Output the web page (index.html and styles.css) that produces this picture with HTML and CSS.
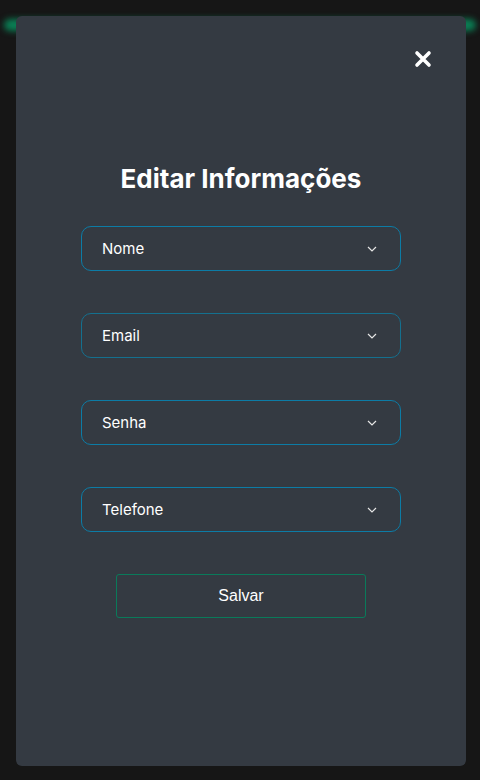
FILE: index.html
```html
<!DOCTYPE html>
<html lang="pt-BR">
<head>
<meta charset="utf-8">
<link rel="stylesheet" href="styles.css">
</head>
<body>
<div class="glow"></div>
<div class="modal">
  <div class="close-row">
    <button class="close" aria-label="Fechar">
      <svg width="18" height="18" viewBox="0 0 18 18"><path d="M3 3L15 15M15 3L3 15" stroke="#fff" stroke-width="3.6" stroke-linecap="round"/></svg>
    </button>
  </div>
  <h1 class="title">Editar Informações</h1>
  <div class="fields">
    <div class="field"><span>Nome</span><svg class="chev" width="10" height="6" viewBox="0 0 10 6"><path d="M1 1L5 5L9 1" fill="none" stroke="#e6e6e6" stroke-width="1.2"/></svg></div>
    <div class="field alt"><span>Email</span><svg class="chev" width="10" height="6" viewBox="0 0 10 6"><path d="M1 1L5 5L9 1" fill="none" stroke="#e6e6e6" stroke-width="1.2"/></svg></div>
    <div class="field"><span>Senha</span><svg class="chev" width="10" height="6" viewBox="0 0 10 6"><path d="M1 1L5 5L9 1" fill="none" stroke="#e6e6e6" stroke-width="1.2"/></svg></div>
    <div class="field"><span>Telefone</span><svg class="chev" width="10" height="6" viewBox="0 0 10 6"><path d="M1 1L5 5L9 1" fill="none" stroke="#e6e6e6" stroke-width="1.2"/></svg></div>
  </div>
  <button class="save">Salvar</button>
</div>
</body>
</html>
```
FILE: styles.css
```css
html, body {
  margin: 0;
  padding: 0;
  height: 100%;
}
body {
  background: #161616;
  font-family: Inter, "Noto Sans", sans-serif;
  color: #fff;
  position: relative;
  overflow: hidden;
}
.glow {
  position: absolute;
  left: 4px;
  right: 4px;
  top: 19px;
  height: 12px;
  border-radius: 6px;
  background: #0a8055;
  filter: blur(3px);
}
.modal {
  position: absolute;
  left: 16px;
  top: 16px;
  width: 450px;
  height: 750px;
  box-sizing: border-box;
  background: #343a42;
  border-radius: 6px;
  display: flex;
  flex-direction: column;
  align-items: center;
}
.close-row {
  align-self: stretch;
  display: flex;
  justify-content: flex-end;
  padding: 34px 34px 0 0;
}
.close {
  background: none;
  border: 0;
  padding: 0;
  width: 18px;
  height: 18px;
  display: flex;
  cursor: pointer;
}
.title {
  margin: 95px 0 0 0;
  font-size: 26px;
  font-weight: 700;
  line-height: 32px;
  letter-spacing: 0;
}
.fields {
  margin-top: 31px;
  display: flex;
  flex-direction: column;
  gap: 42px;
}
.field {
  width: 320px;
  height: 45px;
  box-sizing: border-box;
  border: 1px solid #0c7ca6;
  border-radius: 10px;
  display: flex;
  align-items: center;
  justify-content: space-between;
  padding: 0 23px 0 20px;
  font-size: 15px;
}
.field.alt {
  border-color: #14708f;
}
.chev {
  display: block;
}
.save {
  margin-top: 42px;
  width: 250px;
  height: 44px;
  background: transparent;
  border: 1px solid #0a7a5a;
  border-radius: 3px;
  color: #fff;
  font-family: "Liberation Sans", Arial, sans-serif;
  font-size: 16px;
  cursor: pointer;
}
```
